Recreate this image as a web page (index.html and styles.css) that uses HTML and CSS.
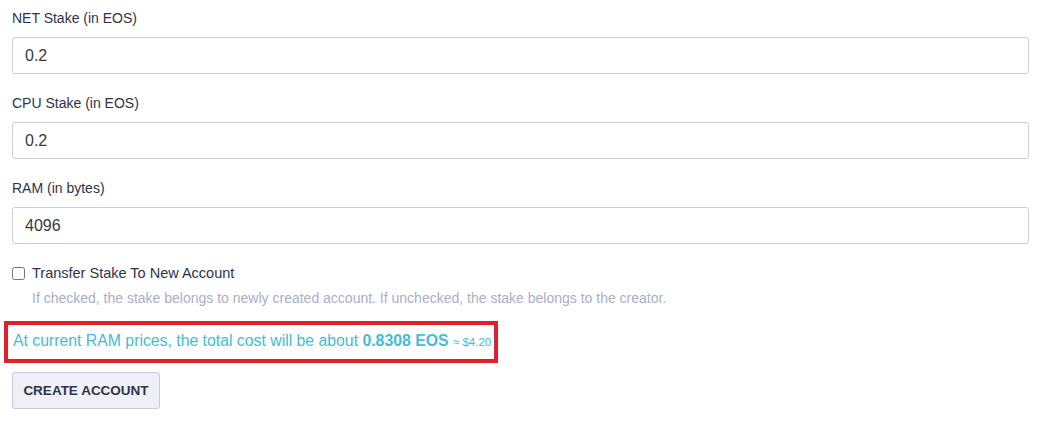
FILE: index.html
```html
<!DOCTYPE html>
<html>
<head>
<meta charset="utf-8">
<link rel="stylesheet" href="styles.css">
</head>
<body>
<form class="form">
  <div class="field">
    <label class="label">NET Stake (in EOS)</label>
    <input class="input" type="text" value="0.2">
  </div>
  <div class="field">
    <label class="label">CPU Stake (in EOS)</label>
    <input class="input" type="text" value="0.2">
  </div>
  <div class="field">
    <label class="label">RAM (in bytes)</label>
    <input class="input" type="text" value="4096">
  </div>
  <div class="check-row">
    <input class="check" type="checkbox">
    <span class="check-label">Transfer Stake To New Account</span>
  </div>
  <p class="help">If checked, the stake belongs to newly created account. If unchecked, the stake belongs to the creator.</p>
  <div class="cost-box">
    <span class="cost">At current RAM prices, the total cost will be about <strong>0.8308 EOS</strong> <small>≈ $4.20</small></span>
  </div>
  <button class="btn" type="button">CREATE ACCOUNT</button>
</form>
</body>
</html>
```
FILE: styles.css
```css
html, body {
  margin: 0;
  padding: 0;
  background: #ffffff;
}
body {
  font-family: "Liberation Sans", Arial, sans-serif;
  color: #333a50;
}
.form {
  padding: 8px 13px 0 12px;
  display: flex;
  flex-direction: column;
  align-items: stretch;
}
.field {
  display: flex;
  flex-direction: column;
  margin-bottom: 19px;
}
.label {
  font-size: 14px;
  line-height: 20px;
  margin-bottom: 9px;
  color: #2e344a;
}
.input {
  box-sizing: border-box;
  height: 37px;
  border: 1px solid #cfcfcf;
  border-radius: 3px;
  padding: 0 12px;
  font-family: "Liberation Sans", Arial, sans-serif;
  font-size: 16px;
  color: #3a3a3a;
  outline: none;
}
.check-row {
  display: flex;
  align-items: center;
  height: 20px;
}
.check {
  margin: 0 7px 0 0;
  width: 13px;
  height: 13px;
}
.check-label {
  font-size: 14.5px;
  color: #2e344a;
}
.help {
  margin: 6px 0 0 20px;
  font-size: 14px;
  line-height: 18px;
  color: #a9afc6;
}
.cost-box {
  align-self: flex-start;
  margin: 14px 0 0 -8px;
  border: 4px solid #e2202c;
  padding: 6px 3px 7px 5px;
  line-height: 20px;
}
.cost {
  font-size: 15.8px;
  color: #45bdd2;
}
.cost strong {
  font-weight: bold;
}
.cost small {
  font-size: 11.5px;
}
.btn {
  align-self: flex-start;
  margin-top: 9px;
  height: 37px;
  width: 148px;
  box-sizing: border-box;
  background: #eef0f5;
  border: 1px solid #c8cbd6;
  border-radius: 3px;
  font-family: "Liberation Sans", Arial, sans-serif;
  font-weight: bold;
  font-size: 13.5px;
  color: #2e344a;
  padding: 0;
}
```
